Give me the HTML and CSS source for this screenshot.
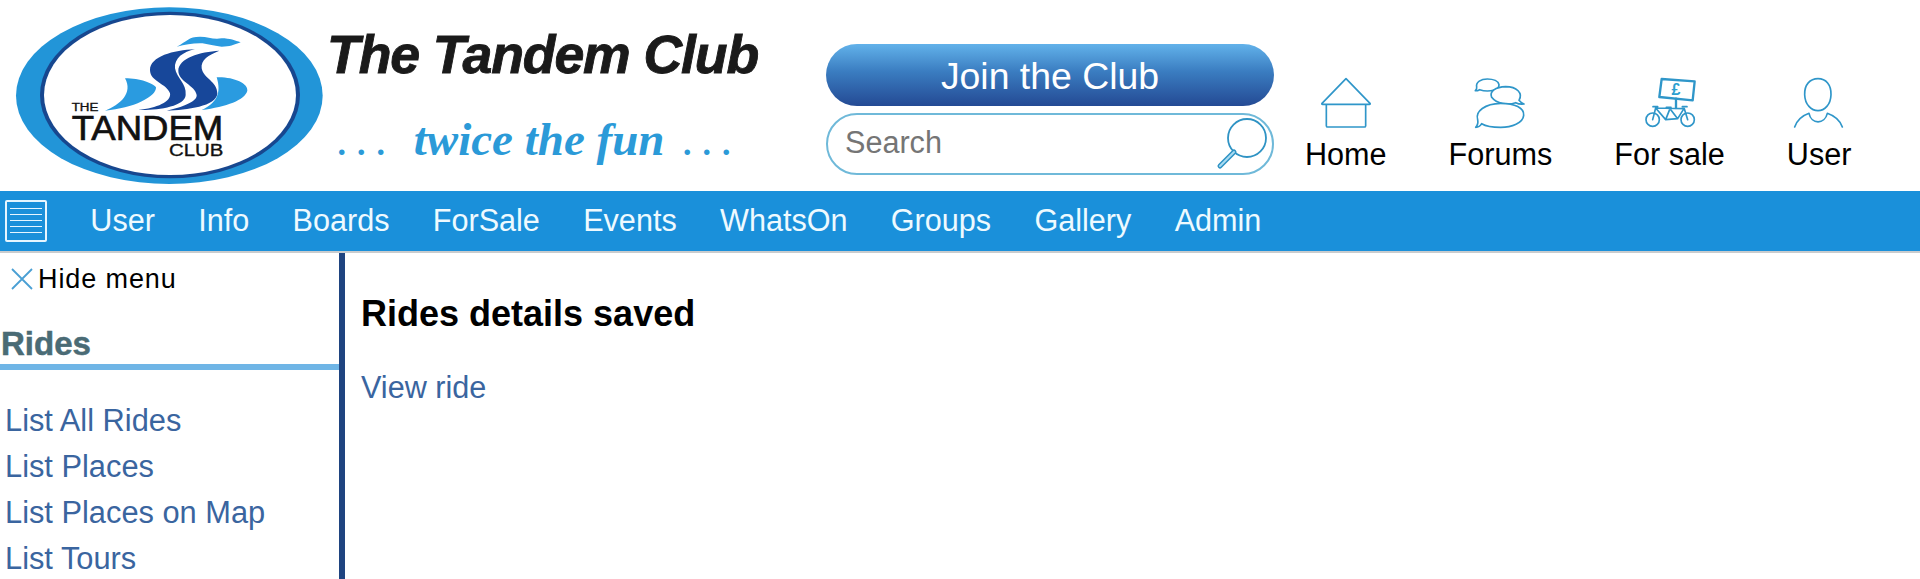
FILE: index.html
```html
<!DOCTYPE html>
<html lang="en">
<head>
<meta charset="utf-8">
<title>The Tandem Club</title>
<link rel="stylesheet" href="styles.css">
</head>
<body>
<header class="top">
  <svg class="logo" viewBox="0 0 987 573" aria-label="The Tandem Club logo">
    <ellipse cx="508" cy="287" rx="460" ry="265" fill="#2295d8"/>
    <ellipse cx="510" cy="285" rx="390" ry="250" fill="#17478f"/>
    <ellipse cx="510" cy="285" rx="378" ry="240" fill="#fff"/>
    <path fill="#2a9be0" d="M530,140 C560,125 565,110 600,110 C625,110 640,120 665,115 C690,115 705,122 722,127 C700,135 690,140 665,140 C640,138 620,130 600,130 C575,130 555,135 530,140Z"/>
    <path fill="#2a9be0" d="M375,235 C420,235 460,250 468,262 C470,290 400,325 315,332 C360,315 400,280 375,235Z"/>
    <path fill="#2a9be0" d="M650,232 C700,230 745,250 742,272 C735,300 680,320 605,330 C650,310 665,280 650,232Z"/>
    <path fill="#17479a" d="M585,148 C520,150 450,170 450,210 C450,245 500,250 510,280 C515,305 470,325 415,330 C470,332 555,320 557,285 C560,250 530,235 525,205 C522,175 550,155 585,148Z"/>
    <path fill="#17479a" d="M658,152 C600,155 535,175 535,212 C535,245 585,255 590,285 C592,305 545,322 500,332 C560,330 650,320 652,280 C652,245 610,235 605,205 C602,180 625,165 658,152Z"/>
    <text class="logo-the" x="215" y="333" textLength="80" lengthAdjust="spacingAndGlyphs">THE</text>
    <text class="logo-tandem" x="215" y="420" textLength="455" lengthAdjust="spacingAndGlyphs">TANDEM</text>
    <text class="logo-club" x="507" y="468" textLength="163" lengthAdjust="spacingAndGlyphs">CLUB</text>
  </svg>
  <div class="brand">
    <div class="brand-title">The Tandem Club</div>
    <div class="brand-tag"><span class="dots">. . .</span>twice the fun<span class="dots dots-end">. . .</span></div>
  </div>
  <div class="cta">
    <a class="join" href="#">Join the Club</a>
    <div class="search">
      <span class="search-text">Search</span>
      <svg class="search-icon" viewBox="0 0 60 60">
        <circle cx="35" cy="24" r="19" fill="none" stroke="#2f93c4" stroke-width="1.8"/>
        <path d="M22,38 L8,52" stroke="#2f93c4" stroke-width="5" stroke-linecap="round"/>
        <path d="M22,38 L8,52" stroke="#a9dcf2" stroke-width="2" stroke-linecap="round"/>
      </svg>
    </div>
  </div>
  <nav class="quick">
    <a class="quick-item" href="#">
      <svg class="qi" viewBox="0 0 150 150">
        <path d="M75,2 L3,76 Q1,79 5,79 H145 Q149,79 147,76 Z M16,79 V143 Q16,147 20,147 H130 Q134,147 134,143 V79"/>
      </svg>
      <span>Home</span>
    </a>
    <a class="quick-item" href="#">
      <svg class="qi" viewBox="0 0 150 150">
        <path d="M14,35 C8,38 5,39 1,38 C5,34 6,32 5,27 C2,12 18,3 37,3 C56,3 70,10 72,20 C72,28 66,34 58,36 C44,40 28,40 14,35Z"/>
        <path fill="#fff" d="M132,67 C136,72 140,76 147,78 C139,79 130,78 122,74 C100,82 65,78 50,58 C42,40 62,27 92,26 C125,26 145,45 132,67Z"/>
        <path fill="#fff" d="M20,137 C16,144 9,148 2,148 C7,143 10,135 8,125 C0,100 30,77 77,76 C120,76 148,90 146,112 C144,135 110,148 77,148 C55,148 35,146 20,137Z"/>
      </svg>
      <span>Forums</span>
    </a>
    <a class="quick-item" href="#">
      <svg class="qi" viewBox="0 0 150 150">
        <path class="heavy" d="M50,3 L149,10 L143,67 L43,57Z"/>
        <path class="heavy" d="M93,62 V90"/>
        <circle class="thin" cx="23" cy="125" r="20"/>
        <circle class="thin" cx="128" cy="125" r="20"/>
        <path class="thin" d="M23,125 L32,90 L118,92 L128,125 M32,90 L62,125 L75,92 M62,125 L98,122 L75,92 M98,122 L115,95 M24,86 H38 M64,88 H78 M112,86 H126"/>
        <text class="pound" x="93" y="50" text-anchor="middle">£</text>
      </svg>
      <span>For sale</span>
    </a>
    <a class="quick-item" href="#">
      <svg class="qi" viewBox="0 0 150 150">
        <path d="M72,2 C96,2 112,20 111,50 C110,80 92,98 72,98 C52,98 33,80 32,50 C31,20 48,2 72,2Z"/>
        <path d="M2,147 C10,125 25,113 45,106 C52,140 92,140 100,106 C120,113 137,125 145,147"/>
      </svg>
      <span>User</span>
    </a>
  </nav>
</header>

<nav class="bar">
  <a class="burger" href="#" aria-label="Menu"><i></i><i></i><i></i><i></i><i></i></a>
  <a href="#">User</a>
  <a href="#">Info</a>
  <a href="#">Boards</a>
  <a href="#">ForSale</a>
  <a href="#">Events</a>
  <a href="#">WhatsOn</a>
  <a href="#">Groups</a>
  <a href="#">Gallery</a>
  <a href="#">Admin</a>
</nav>

<div class="page">
  <aside class="side">
    <div class="hide">
      <svg class="hide-x" viewBox="0 0 22 22"><path d="M1,1 L21,21 M21,1 L1,21"/></svg>
      <span>Hide menu</span>
    </div>
    <h3 class="side-title">Rides</h3>
    <ul class="side-list">
      <li><a href="#">List All Rides</a></li>
      <li><a href="#">List Places</a></li>
      <li><a href="#">List Places on Map</a></li>
      <li><a href="#">List Tours</a></li>
    </ul>
  </aside>
  <main class="main">
    <h2 class="saved">Rides details saved</h2>
    <a class="view" href="#">View ride</a>
  </main>
</div>
</body>
</html>
```
FILE: styles.css
```css
* { box-sizing: border-box; }
html, body { margin: 0; padding: 0; height: 579px; overflow: hidden; background: #fff; }
body { font-family: "Liberation Sans", Arial, sans-serif; color: #000; }
a { text-decoration: none; color: inherit; }

.top { display: flex; height: 191px; background: #fff; }
.logo { width: 329px; height: 191px; flex: none; }
.logo text { font-family: "Liberation Sans", Arial, sans-serif; fill: #111; stroke: #111; }
.logo-the { font-size: 30px; stroke-width: 1px; }
.logo-tandem { font-size: 105px; stroke-width: 2px; }
.logo-club { font-size: 50px; stroke-width: 1px; }

.brand { width: 497px; flex: none; }
.brand-title { font-size: 53.6px; font-weight: 700; font-style: italic; letter-spacing: -1.1px; -webkit-text-stroke: 0.9px #1a1a1a; color: #1a1a1a; line-height: 62px; margin-top: 23px; margin-left: -2px; }
.brand-tag { display: flex; margin: 24px 0 0 8px; font-family: "Liberation Serif", serif; font-style: italic; font-weight: 700; font-size: 47px; line-height: 60px; color: #2b9ad8; white-space: pre; }
.dots { font-weight: 400; letter-spacing: -2px; margin-right: 28px; }
.dots-end { margin: 0 0 0 18px; }

.cta { width: 448px; flex: none; display: flex; flex-direction: column; gap: 7px; padding-top: 44px; }
.join { display: flex; align-items: center; justify-content: center; height: 62px; padding-top: 3px; border-radius: 31px; font-size: 37.4px; color: #fff; background: linear-gradient(#62b2ea, #3a7cc0 45%, #244a94); }
.search { display: flex; align-items: center; justify-content: space-between; height: 62px; border: 2px solid #6fb9d9; border-radius: 31px; padding: 0 0 0 17px; }
.search-text { font-size: 30.6px; color: #757575; padding-bottom: 3px; }
.search-icon { width: 60px; height: 60px; flex: none; }

.quick { display: flex; gap: 62px; margin-left: 31px; align-items: flex-end; padding-bottom: 19px; }
.quick-item { display: flex; flex-direction: column; align-items: center; gap: 8px; font-size: 30.6px; line-height: 36px; color: #000; white-space: nowrap; }
.qi { height: 50px; width: 50px; display: block; overflow: visible; fill: none; stroke: #2f96c9; stroke-width: 5; stroke-linejoin: round; stroke-linecap: round; }
.qi .thin { stroke-width: 5; }
.qi .heavy { stroke-width: 7; }
.qi .pound { font-family: "Liberation Sans", sans-serif; font-weight: 700; font-size: 48px; fill: #2b9fd0; stroke: none; }

.bar { display: flex; align-items: center; gap: 43.3px; height: 62px; background: #1a90da; border-bottom: 2px solid #c9ccce; font-size: 30.6px; color: #fff; padding-left: 5px; padding-bottom: 1px; }
.bar a { color: #eefaff; }
.burger { display: flex; flex-direction: column; justify-content: space-evenly; width: 42px; height: 42px; border: 2px solid #e6f6ff; border-radius: 2px; padding: 2px 3px; }
.burger i { display: block; height: 1.5px; background: #e6f6ff; }

.page { display: flex; height: 326px; overflow: hidden; }
.side { width: 345px; flex: none; border-right: 6px solid #1f4480; }
.hide { display: flex; align-items: center; gap: 5px; height: 52px; padding: 0 0 0 11px; font-size: 27px; letter-spacing: 0.9px; color: #000; }
.hide-x { width: 22px; height: 22px; fill: none; stroke: #4a9fd4; stroke-width: 1.8; flex: none; }
.side-title { margin: 0; height: 65px; padding: 19px 0 0 1px; font-size: 33px; line-height: 40px; font-weight: 700; -webkit-text-stroke: 0.5px #4a6b75; color: #4a6b75; border-bottom: 6px solid #6fb5e6; }
.side-list { list-style: none; margin: 28px 0 0; padding: 0 0 0 5px; font-size: 30.8px; line-height: 46px; color: #3a659f; }

.main { flex: 1; padding: 0 0 0 16px; }
.saved { margin: 37px 0 0; font-size: 36px; line-height: 48px; font-weight: 700; color: #000; }
.view { display: block; margin-top: 31px; font-size: 30.6px; line-height: 36px; color: #3a659f; }
```
